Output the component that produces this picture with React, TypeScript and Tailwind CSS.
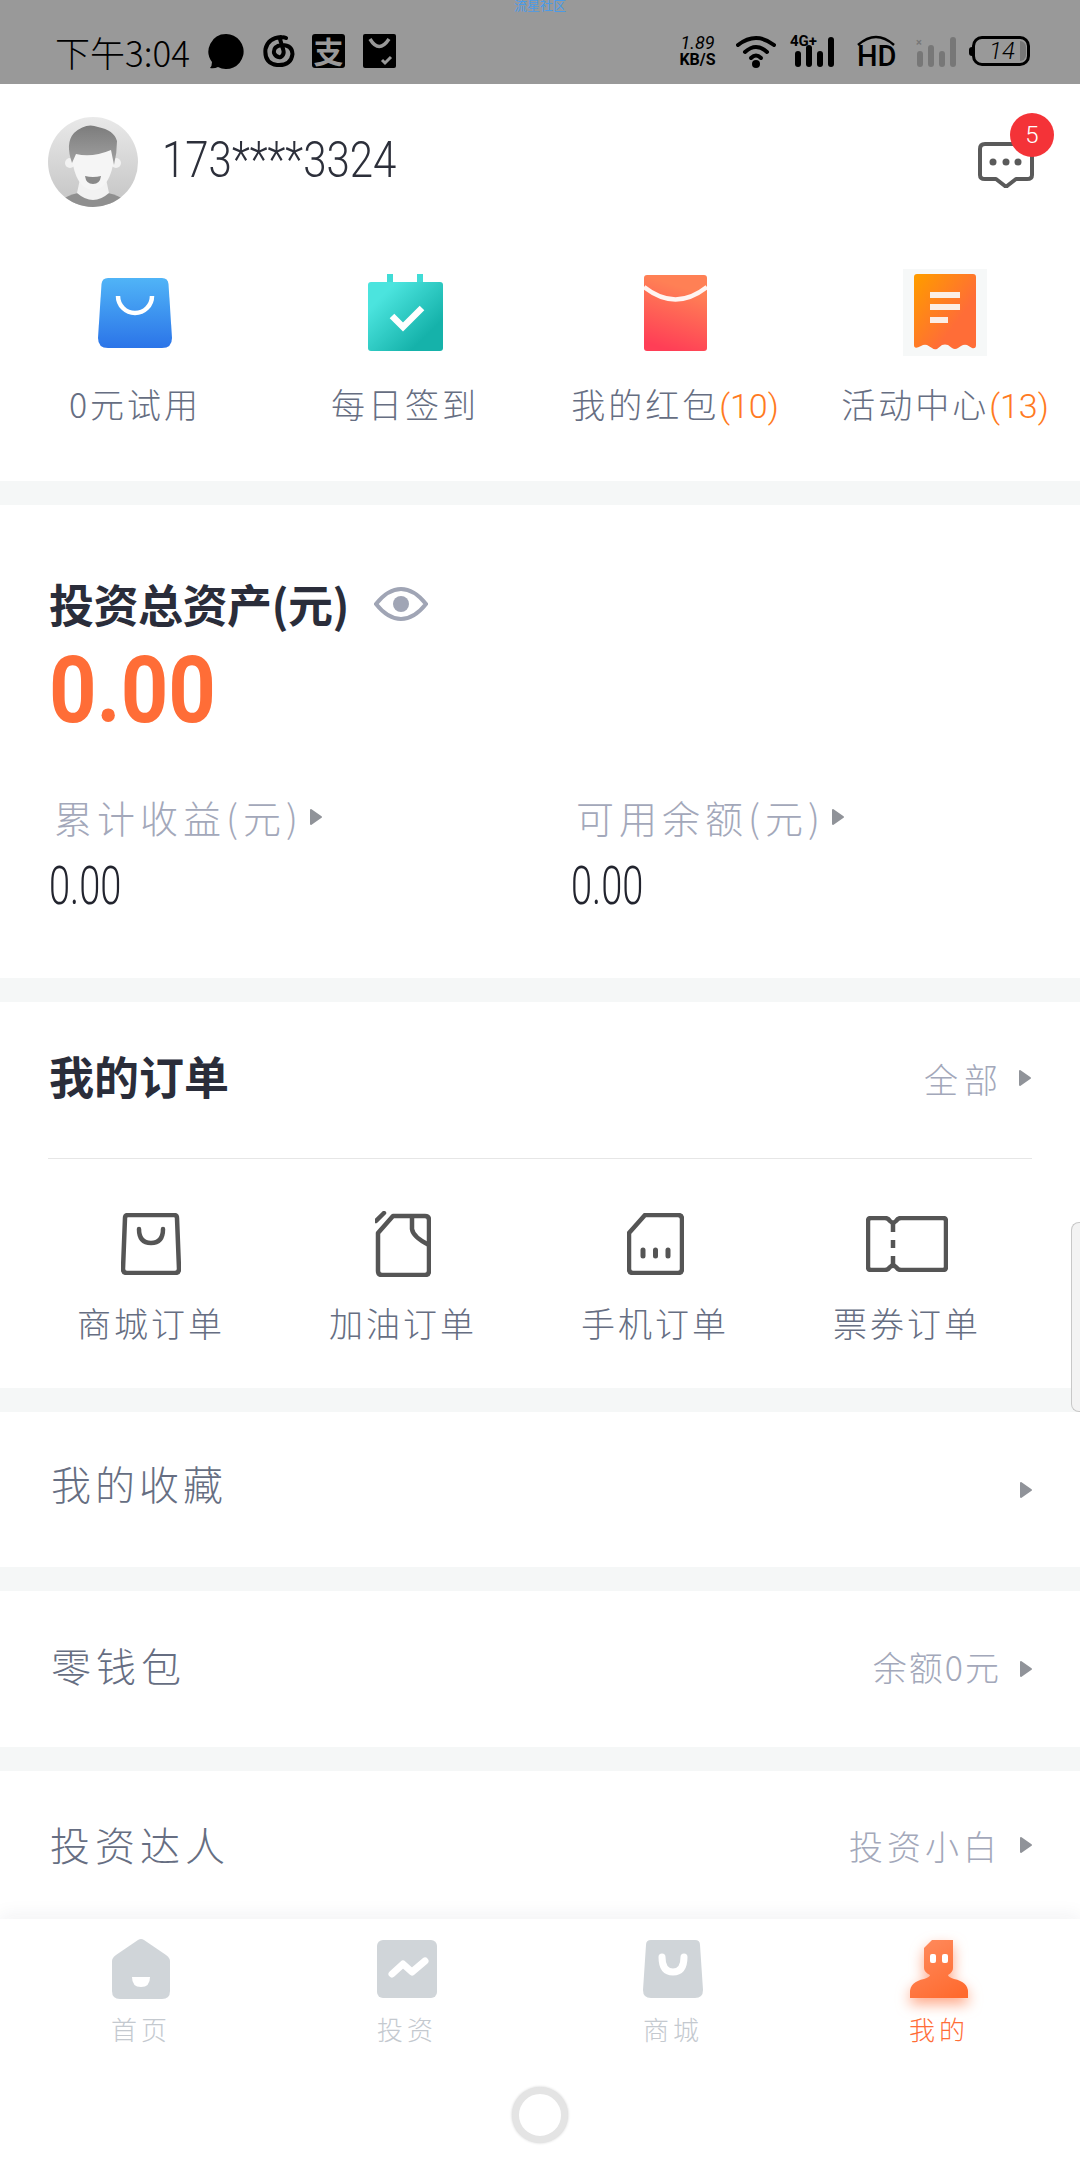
const cjk = "font-['Noto_Sans_CJK_SC',sans-serif]";

function Arrow({ className = '' }: { className?: string }) {
  return (
    <svg width="14" height="18" viewBox="0 0 14 18" className={className}>
      <path d="M2 2 L12 9 L2 16 Z" fill="#909399" stroke="#909399" strokeWidth="2" strokeLinejoin="round" />
    </svg>
  );
}

function Signal({ muted = false }: { muted?: boolean }) {
  const c = muted ? '#777' : '#000';
  return (
    <svg width="40" height="30" viewBox="0 0 40 30">
      <rect x="0" y="14" width="6" height="16" rx="3" fill={c} />
      <rect x="11" y="8" width="6" height="22" rx="3" fill={c} />
      <rect x="22" y="14" width="6" height="16" rx="3" fill={c} />
      <rect x="33" y="0" width="6" height="30" rx="3" fill={c} />
    </svg>
  );
}

function StatusBar() {
  return (
    <div className="relative h-[84px] shrink-0 bg-[#999999] text-black overflow-hidden">
      <div className={`absolute top-[-4px] left-0 right-0 text-center text-[13px] leading-[18px] tracking-[0px] text-[#4a9be8] ${cjk}`}>流星社区</div>
      <div className="flex items-center justify-between h-full pl-[55px] pr-[50px] pt-[24px] pb-[6px]">
        <div className="flex items-center">
          <span className={`text-[35px] leading-none w-[142px] font-light whitespace-nowrap ${cjk}`}>下午3:04</span>
          <svg width="36" height="35" viewBox="0 0 36 35" className="ml-[11px]">
            <path d="M18 0 A17.5 17.5 0 1 1 10 33 Q6 35 2 34 Q4 32 4 28 A17.5 17.5 0 0 1 18 0Z" fill="#000" />
          </svg>
          <svg width="34" height="34" viewBox="0 0 34 34" className="ml-[18px]">
            <path d="M19 3 Q6 4 3.500 15 Q2 29 15 31 Q29 32 30.500 20 Q30 11 20 11 Q11 12 12 19 Q14 24 19 23 Q23 20 21 15 L18 5 Q20 2 24 4" fill="none" stroke="#000" strokeWidth="4" strokeLinecap="round" />
          </svg>
          <div className={`ml-[16px] w-[33px] h-[34px] rounded-[3px] bg-black text-[#999999] text-[30px] leading-[33px] text-center font-bold ${cjk}`}>支</div>
          <svg width="33" height="34" viewBox="0 0 33 34" className="ml-[18px]">
            <rect width="33" height="34" rx="2" fill="#000" />
            <path d="M7 5 Q16 20 26 5" fill="none" stroke="#999" strokeWidth="3.500" />
            <path d="M19 26 L22 29 L28 23" fill="none" stroke="#999" strokeWidth="3" />
          </svg>
        </div>
        <div className="flex items-center">
          <div className="w-[43px] text-center font-['Roboto',sans-serif] font-bold leading-none">
            <div className="text-[18px] italic font-normal">1.89</div>
            <div className="text-[16px] whitespace-nowrap">KB/S</div>
          </div>
          <svg width="40" height="34" viewBox="0 0 40 34" className="ml-[17px]">
            <path d="M2 11 Q20 -3 38 11" fill="none" stroke="#000" strokeWidth="4" strokeLinecap="round" />
            <path d="M9 18 Q20 8 31 18" fill="none" stroke="#000" strokeWidth="4" strokeLinecap="round" />
            <path d="M15 24 Q20 19 25 24" fill="none" stroke="#000" strokeWidth="4" strokeLinecap="round" />
            <circle cx="20" cy="30" r="4" fill="#000" />
          </svg>
          <div className="relative ml-[14px] w-[45px] h-[32px] flex items-end justify-end">
            <span className="absolute left-0 top-[-1px] font-['Roboto',sans-serif] font-bold text-[15px] leading-none">4G+</span>
            <Signal />
          </div>
          <div className="ml-[22px] w-[38px] h-[34px] relative">
            <svg width="38" height="12" viewBox="0 0 38 12" className="absolute top-0 left-0">
              <path d="M1 11 Q19 -5 37 11" fill="none" stroke="#000" strokeWidth="2.500" />
            </svg>
            <span className="absolute left-0 bottom-[-3px] font-['Roboto',sans-serif] font-medium text-[29px] leading-none">HD</span>
          </div>
          <div className="relative ml-[21px] w-[41px] h-[32px] flex items-end justify-end">
            <span className="absolute left-0 top-[2px] font-['Roboto',sans-serif] font-bold text-[11px] leading-none text-[#777]">×</span>
            <Signal muted />
          </div>
          <div className="relative ml-[15px] w-[58px] h-[30px] rounded-[10px] border-[3px] border-black flex items-center">
            <span className="ml-[14px] text-[24px] italic leading-none font-['Roboto',sans-serif] font-light">14</span>
            <div className="absolute right-[1px] top-[2px] bottom-[2px] w-[6px] rounded-r-[6px] bg-[#777]"></div>
            <div className="absolute left-[-6px] top-[8px] w-[4px] h-[9px] rounded-l-[3px] bg-black"></div>
          </div>
        </div>
      </div>
    </div>
  );
}

function Avatar() {
  return (
    <svg width="90" height="90" viewBox="0 0 90 90">
      <defs>
        <linearGradient id="avBg" x1="0" y1="0" x2="0" y2="1">
          <stop offset="0" stopColor="#e9e9e9" />
          <stop offset="1" stopColor="#c4c4c4" />
        </linearGradient>
        <linearGradient id="hair" x1="0" y1="0" x2="0" y2="1">
          <stop offset="0" stopColor="#7c7c7c" />
          <stop offset="1" stopColor="#a2a2a2" />
        </linearGradient>
        <clipPath id="avClip"><circle cx="45" cy="45" r="45" /></clipPath>
      </defs>
      <g clipPath="url(#avClip)">
        <rect width="90" height="90" fill="url(#avBg)" />
        <path d="M12 84 Q20 78 30 76 L60 76 Q70 78 78 84 L78 90 L12 90Z" fill="#8f8f8f" />
        <path d="M29 76 Q45 90 61 76 L58 62 L32 62Z" fill="#f2f2f2" />
        <circle cx="22" cy="46" r="5" fill="#f2f2f2" />
        <circle cx="68" cy="46" r="5" fill="#f2f2f2" />
        <path d="M25 30 L65 30 L65 48 Q60 72 45 73 Q30 72 25 48Z" fill="#f5f5f5" />
        <path d="M24 46 Q17 26 26 16 Q38 5 50 10 Q66 13 69 24 Q69 36 66 48 L63 33 Q44 41 28 37Z" fill="url(#hair)" />
        <path d="M37 59 Q45 61 53 59 Q52 67 45 67 Q38 67 37 59Z" fill="#8a8a8a" />
      </g>
    </svg>
  );
}

function Header() {
  return (
    <div className="relative flex items-center h-[154px] pl-[48px] pt-[2px]">
      <Avatar />
      <span className="ml-[24px] mb-[5px] text-[42px] leading-none font-light scale-y-[1.2] text-[#2c2f3a] font-['Roboto',sans-serif]">173****3324</span>
      <svg width="56" height="46" viewBox="0 0 56 46" className="absolute left-[978px] top-[58px]">
        <path d="M7 2 H49 Q54 2 54 7 V33 Q54 37 49 37 H38 L29 44 Q28 45 27 44 L18 37 H7 Q2 37 2 33 V7 Q2 2 7 2Z" fill="none" stroke="#5a5a5a" strokeWidth="4" strokeLinejoin="round" />
        <circle cx="15" cy="20" r="3.500" fill="#5a5a5a" />
        <circle cx="28" cy="20" r="3.500" fill="#5a5a5a" />
        <circle cx="40" cy="20" r="3.500" fill="#5a5a5a" />
      </svg>
      <span className="absolute left-[1010px] top-[29px] w-[44px] h-[44px] rounded-full bg-[#f43338] text-white text-[24px] leading-[44px] text-center font-light font-['Roboto',sans-serif]">5</span>
    </div>
  );
}

function BagColor() {
  return (
    <svg width="74" height="70" viewBox="0 0 74 70">
      <defs>
        <linearGradient id="bagBlue" x1="0" y1="0" x2="0" y2="1">
          <stop offset="0" stopColor="#50b4f7" />
          <stop offset="1" stopColor="#2b74e8" />
        </linearGradient>
      </defs>
      <path d="M10 0 H64 Q70 0 70.500 6 L74 60 Q74 70 64 70 H10 Q0 70 0 60 L3.500 6 Q4 0 10 0Z" fill="url(#bagBlue)" />
      <path d="M20 18 a17 17 0 0 0 34 0" fill="none" stroke="#fff" strokeWidth="4.500" />
    </svg>
  );
}

function CalendarColor() {
  return (
    <svg width="75" height="77" viewBox="0 0 75 77">
      <defs>
        <linearGradient id="calTeal" x1="0.1" y1="0.15" x2="0.85" y2="0.85">
          <stop offset="0.1" stopColor="#4be4de" />
          <stop offset="0.9" stopColor="#15b2aa" />
        </linearGradient>
      </defs>
      <rect x="19" y="0" width="6" height="9" fill="#40dcd6" />
      <rect x="49" y="0" width="6" height="9" fill="#40dcd6" />
      <rect x="0" y="8" width="75" height="69" rx="3" fill="url(#calTeal)" />
      <path d="M24 42 L35 53 L54 34" fill="none" stroke="#fff" strokeWidth="6.500" />
    </svg>
  );
}

function EnvelopeColor() {
  return (
    <svg width="63" height="76" viewBox="0 0 63 76">
      <defs>
        <linearGradient id="envRed" x1="0.6" y1="0" x2="0.6" y2="1" gradientTransform="rotate(15)">
          <stop offset="0" stopColor="#ff8055" />
          <stop offset="0.85" stopColor="#ff3e56" />
        </linearGradient>
      </defs>
      <rect width="63" height="76" rx="3" fill="url(#envRed)" />
      <path d="M0 12 Q31.500 37 63 12" fill="none" stroke="#fff" strokeWidth="4.500" opacity="0.92" />
    </svg>
  );
}

function ReceiptColor() {
  return (
    <div className="w-[84px] h-[87px] bg-[#f6f8f8] flex items-start justify-center pt-[5px]">
      <svg width="62" height="77" viewBox="0 0 62 77">
        <defs>
          <linearGradient id="recOrange" x1="0" y1="0" x2="1" y2="0.9">
            <stop offset="0.05" stopColor="#ff9a00" />
            <stop offset="0.7" stopColor="#ff6d37" />
          </linearGradient>
        </defs>
        <path d="M3 0 H59 Q62 0 62 3 V71 Q62 75 58 74 L53 71 Q50 70 47 72 L44 74 Q41 76 38 74 L34 71 Q31 70 28 71 L23 75 Q20 76 18 74 L13 71 Q10 70 7 72 Q0 76 0 71 V3 Q0 0 3 0Z" fill="url(#recOrange)" />
        <rect x="16" y="18" width="30" height="6" fill="#fbeee5" />
        <rect x="16" y="30" width="30" height="6" fill="#fbeee5" />
        <rect x="16" y="43" width="18" height="6" fill="#fbeee5" />
      </svg>
    </div>
  );
}

const quickItems = [
  { icon: <BagColor />, label: '0元试用', count: '' },
  { icon: <CalendarColor />, label: '每日签到', count: '' },
  { icon: <EnvelopeColor />, label: '我的红包', count: '(10)' },
  { icon: <ReceiptColor />, label: '活动中心', count: '(13)' },
];

function QuickRow() {
  return (
    <div className="grid grid-cols-4 h-[243px] pt-[31px]">
      {quickItems.map((item) => (
        <div key={item.label} className="flex flex-col items-center">
          <div className="h-[87px] flex items-center justify-center">{item.icon}</div>
          <div className={`mt-[26px] text-[34px] leading-[44px] tracking-[3px] whitespace-nowrap font-light text-[#666e82] ${cjk}`}>
            {item.label}
            {item.count && <span className="text-[#ff7a22] tracking-[0px] font-['Roboto',sans-serif]">{item.count}</span>}
          </div>
        </div>
      ))}
    </div>
  );
}

function Gap() {
  return <div className="h-[24px] shrink-0 bg-[#f5f7f7]"></div>;
}

function AssetColumn({ label }: { label: string }) {
  return (
    <div>
      <div className="flex items-center h-[50px] pl-[5px]">
        <span className={`text-[38px] leading-[50px] tracking-[5px] font-light whitespace-nowrap text-[#a3a8ba] ${cjk}`}>{label}</span>
        <Arrow className="ml-[6px]" />
      </div>
      <div className="mt-[19px] text-[38px] leading-[50px] font-light origin-left scale-y-[1.4] text-[#22242e] font-['Roboto',sans-serif]">0.00</div>
    </div>
  );
}

function AssetCard() {
  return (
    <div className="h-[473px] pt-[69px] pl-[49px]">
      <div className="flex items-center h-[60px]">
        <span className={`text-[45px] leading-[60px] font-bold tracking-[-0.5px] whitespace-nowrap text-[#2a2d3a] ${cjk}`}>投资总资产(元)</span>
        <svg width="54" height="36" viewBox="0 0 54 36" className="ml-[25px]">
          <path d="M2 18 Q14 3 27 3 Q40 3 52 18 Q40 33 27 33 Q14 33 2 18Z" fill="none" stroke="#a0a5b5" strokeWidth="4" />
          <circle cx="27" cy="18" r="8" fill="#a0a5b5" />
        </svg>
      </div>
      <div className="mt-[12px] h-[90px] text-[83px] leading-[90px] font-bold origin-left scale-y-[1.12] text-[#ff6d37] font-['Roboto',sans-serif]">0.00</div>
      <div className="mt-[56px] grid grid-cols-[522px_1fr]">
        <AssetColumn label="累计收益(元)" />
        <AssetColumn label="可用余额(元)" />
      </div>
    </div>
  );
}

function BagLine() {
  return (
    <svg width="60" height="62" viewBox="0 0 60 62" fill="none" stroke="#555" strokeWidth="4.500">
      <path d="M7 2 H53 Q56 2 56 5 L58 56 Q58 60 54 60 H6 Q2 60 2 56 L4 5 Q4 2 7 2Z" strokeLinejoin="round" />
      <path d="M18 16 Q18 30 30 30 Q42 30 42 16" strokeLinecap="round" />
    </svg>
  );
}

function CanLine() {
  return (
    <svg width="56" height="66" viewBox="0 0 56 66" fill="none" stroke="#555" strokeWidth="4.500">
      <path d="M1 10 L9 2" strokeLinecap="round" />
      <path d="M3 22 L18 5 H50 Q54 5 54 9 V60 Q54 64 50 64 H7 Q3 64 3 60Z" strokeLinejoin="round" />
      <path d="M37 5 V18 Q38 26 54 34" />
    </svg>
  );
}

function SimLine() {
  return (
    <svg width="57" height="62" viewBox="0 0 57 62" fill="none" stroke="#555" strokeWidth="4.500">
      <path d="M2 20 L18 2 H51 Q55 2 55 6 V56 Q55 60 51 60 H6 Q2 60 2 56Z" strokeLinejoin="round" />
      <path d="M16 37 V43 M28.500 37 V43 M41 37 V43" strokeWidth="5" strokeLinecap="round" />
    </svg>
  );
}

function TicketLine() {
  return (
    <svg width="82" height="56" viewBox="0 0 82 56" fill="none" stroke="#555" strokeWidth="4.500">
      <path d="M5 2 H19 Q22 2 24 5 Q27 8 30 5 Q32 2 35 2 H77 Q80 2 80 5 V51 Q80 54 77 54 H35 Q32 54 30 51 Q27 48 24 51 Q22 54 19 54 H5 Q2 54 2 51 V5 Q2 2 5 2Z" strokeLinejoin="round" />
      <path d="M27 8 V16 M27 24 V32 M27 40 V48" />
    </svg>
  );
}

const orderItems = [
  { icon: <BagLine />, label: '商城订单' },
  { icon: <CanLine />, label: '加油订单' },
  { icon: <SimLine />, label: '手机订单' },
  { icon: <TicketLine />, label: '票券订单' },
];

function OrderCard() {
  return (
    <div className="h-[386px]">
      <div className="mx-[48px] h-[157px] border-b border-[#e6e6e6] flex items-center justify-between pb-[9px]">
        <span className={`text-[45px] font-bold ml-[1px] text-[#2a2d3a] ${cjk}`}>我的订单</span>
        <div className="flex items-center pt-[5px]">
          <span className={`text-[34px] tracking-[6px] font-light text-[#a3a8ba] ${cjk}`}>全部</span>
          <Arrow className="ml-[14px]" />
        </div>
      </div>
      <div className="grid grid-cols-4 w-[1008px] ml-[25px]">
        {orderItems.map((item) => (
          <div key={item.label} className="flex flex-col items-center">
            <div className="h-[66px] mt-[52px] flex items-center justify-center">{item.icon}</div>
            <div className={`mt-[24px] text-[34px] leading-[44px] tracking-[3px] whitespace-nowrap font-light text-[#666e82] ${cjk}`}>{item.label}</div>
          </div>
        ))}
      </div>
    </div>
  );
}

function ListRow({ title, right, className, titleClass, rightClass = '' }: { title: string; right?: string; className: string; titleClass: string; rightClass?: string }) {
  return (
    <div className={`${className} flex items-center justify-between pl-[50px] pr-[47px] shrink-0`}>
      <span className={`text-[40px] font-light text-[#666e82] ${titleClass} ${cjk}`}>{title}</span>
      <div className="flex items-center">
        {right && <span className={`text-[34px] font-light text-[#a3a8ba] ${rightClass} ${cjk}`}>{right}</span>}
        <Arrow className="ml-[18px]" />
      </div>
    </div>
  );
}

function TabHome() {
  return (
    <svg width="58" height="60" viewBox="0 0 58 60">
      <path d="M26 1 Q29 -1 32 1 L54 16 Q58 19 58 22 V52 Q58 60 50 60 H8 Q0 60 0 52 V22 Q0 19 4 16Z" fill="#d0d5d9" />
      <path d="M20 38 H38 Q38 48 29 48 Q20 48 20 38Z" fill="#fff" />
    </svg>
  );
}

function TabChart() {
  return (
    <svg width="60" height="58" viewBox="0 0 60 58">
      <rect width="60" height="58" rx="6" fill="#d0d5d9" />
      <path d="M15 34 L26 24 L35 32 L48 21" fill="none" stroke="#fff" strokeWidth="7" strokeLinecap="round" strokeLinejoin="round" />
    </svg>
  );
}

function TabBag() {
  return (
    <svg width="60" height="58" viewBox="0 0 60 58">
      <path d="M8 0 H52 Q57 0 57 5 L60 50 Q60 58 52 58 H8 Q0 58 0 50 L3 5 Q3 0 8 0Z" fill="#d0d5d9" />
      <path d="M19 17 Q19 32 30 32 Q41 32 41 17" fill="none" stroke="#fff" strokeWidth="7" strokeLinecap="round" />
    </svg>
  );
}

function TabMine() {
  return (
    <svg width="58" height="58" viewBox="0 0 58 58" className="overflow-visible drop-shadow-[0_6px_7px_rgba(255,109,55,0.6)]">
      <defs>
        <linearGradient id="mineOrange" x1="0.2" y1="0" x2="0.8" y2="1">
          <stop offset="0" stopColor="#ff8a5c" />
          <stop offset="1" stopColor="#ff6a2e" />
        </linearGradient>
      </defs>
      <path d="M22 0 H43 V28 Q43 32 38 35 Q38 37 44 39 Q58 42 58 52 V58 H0 V52 Q0 42 14 39 Q20 37 20 35 Q14 32 14 28 V8Z" fill="url(#mineOrange)" />
      <rect x="20" y="14" width="6" height="9" rx="2" fill="#fff" />
      <rect x="32" y="14" width="6" height="9" rx="2" fill="#fff" />
    </svg>
  );
}

const tabs = [
  { icon: <TabHome />, label: '首页', active: false },
  { icon: <TabChart />, label: '投资', active: false },
  { icon: <TabBag />, label: '商城', active: false },
  { icon: <TabMine />, label: '我的', active: true },
];

function TabBar() {
  return (
    <div className="relative h-[241px] shrink-0 bg-white shadow-[0_-4px_18px_rgba(30,40,60,0.06)]">
      <div className="grid grid-cols-4 px-[8px] pt-[20px]">
        {tabs.map((tab) => (
          <div key={tab.label} className="flex flex-col items-center">
            <div className="h-[60px] flex items-center justify-center">{tab.icon}</div>
            <span className={`mt-[12px] text-[26px] leading-[36px] tracking-[4px] font-light ${tab.active ? 'text-[#ff6d37]' : 'text-[#c4c9cf]'} ${cjk}`}>{tab.label}</span>
          </div>
        ))}
      </div>
      <div className="absolute left-[512px] top-[168px] w-[56px] h-[56px] rounded-full border-[7px] border-[#e4e4e4] bg-white shadow-[0_0_3px_rgba(0,0,0,0.2)]"></div>
    </div>
  );
}

export default function App() {
  return (
    <div className="relative w-[1080px] h-[2160px] bg-white flex flex-col overflow-hidden">
      <StatusBar />
      <Header />
      <QuickRow />
      <Gap />
      <AssetCard />
      <Gap />
      <OrderCard />
      <Gap />
      <ListRow title="我的收藏" className="h-[155px]" titleClass="tracking-[4px] mb-[13px] ml-[1px]" />
      <Gap />
      <ListRow title="零钱包" right="余额0元" className="h-[156px]" titleClass="tracking-[5px] mb-[8px] ml-[1px]" rightClass="tracking-[2px] mb-[5px]" />
      <Gap />
      <ListRow title="投资达人" right="投资小白" className="h-[148px]" titleClass="tracking-[5px] mb-[3px]" rightClass="tracking-[4px]" />
      <TabBar />
      <div className="absolute right-0 top-[1222px] w-[9px] h-[190px] rounded-l-[8px] border border-r-0 border-[#c8c8c8] bg-[#f3f3f3]"></div>
    </div>
  );
}
